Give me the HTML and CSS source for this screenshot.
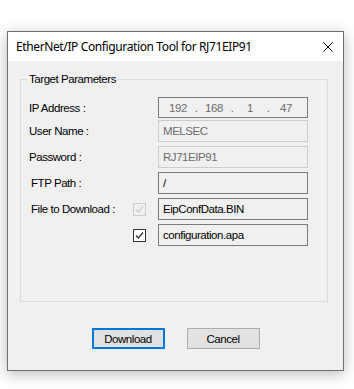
FILE: index.html
```html
<!DOCTYPE html>
<html>
<head>
<meta charset="utf-8">
<link rel="stylesheet" href="styles.css">
</head>
<body>
<div class="window">
  <div class="titlebar">
    <span class="title">EtherNet/IP Configuration Tool for RJ71EIP91</span>
    <svg class="close" width="10" height="10" viewBox="0 0 10 10"><path d="M0.5 0.5 L9.5 9.5 M9.5 0.5 L0.5 9.5" stroke="#000" stroke-width="1" fill="none"/></svg>
  </div>
  <div class="client">
    <fieldset class="group">
      <legend>Target Parameters</legend>
      <div class="rows">
        <div class="row row-ip">
          <span class="label">IP Address :</span>
          <span></span>
          <div class="field ip">
            <span class="oct">192</span><span class="dot">.</span>
            <span class="oct">168</span><span class="dot">.</span>
            <span class="oct">1</span><span class="dot">.</span>
            <span class="oct">47</span>
          </div>
        </div>
        <div class="row row-user">
          <span class="label">User Name :</span>
          <span></span>
          <div class="field disabled">MELSEC</div>
        </div>
        <div class="row">
          <span class="label">Password :</span>
          <span></span>
          <div class="field disabled">RJ71EIP91</div>
        </div>
        <div class="row">
          <span class="label indent">FTP Path :</span>
          <span></span>
          <div class="field">/</div>
        </div>
        <div class="row">
          <span class="label indent">File to Download :</span>
          <svg class="check" width="13" height="13" viewBox="0 0 13 13"><rect x="0.5" y="0.5" width="12" height="12" fill="#f0f0f0" stroke="#cccccc"/><path d="M3 6.5 L5.3 9 L10 3.5" stroke="#cccccc" stroke-width="1.3" fill="none"/></svg>
          <div class="field">EipConfData.BIN</div>
        </div>
        <div class="row">
          <span class="label"></span>
          <svg class="check" width="13" height="13" viewBox="0 0 13 13"><rect x="0.5" y="0.5" width="12" height="12" fill="#ffffff" stroke="#333333"/><path d="M3 6.5 L5.3 9 L10 3.5" stroke="#333333" stroke-width="1.3" fill="none"/></svg>
          <div class="field">configuration.apa</div>
        </div>
      </div>
    </fieldset>
    <div class="buttons">
      <button class="btn default">Download</button>
      <button class="btn">Cancel</button>
    </div>
  </div>
</div>
</body>
</html>
```
FILE: styles.css
```css
html, body {
  margin: 0;
  padding: 0;
  background: #ffffff;
}
body {
  padding: 31px 0 0 7px;
  width: 354px;
  height: 389px;
  box-sizing: border-box;
  overflow: hidden;
}
.window {
  width: 337px;
  height: 340px;
  box-sizing: border-box;
  border: 1px solid #6f6f6f;
  background: #f0f0f0;
  box-shadow: 0 3px 14px rgba(0, 0, 0, 0.28);
  display: flex;
  flex-direction: column;
}
.titlebar {
  height: 29px;
  background: #ffffff;
  display: flex;
  align-items: center;
  padding: 0 9px 0 8px;
  flex: none;
}
.title {
  font-family: "Noto Sans", "Open Sans", sans-serif;
  font-size: 12px;
  color: #000;
  flex: 1;
  letter-spacing: -0.38px;
}
.close {
  display: block;
  margin-right: 1px;
}
.client {
  flex: 1;
  display: flex;
  flex-direction: column;
  font-family: "Liberation Sans", Arial, sans-serif;
  font-size: 11.5px;
  letter-spacing: -0.45px;
  color: #000;
}
.group {
  margin: 11px 15px 0 12px;
  padding: 11px 0 55px 8px;
  border: 1px solid #dcdcdc;
  min-width: 0;
}
.group legend {
  padding: 0 2px;
  margin-left: -2px;
  line-height: 14px;
}
.rows {
  display: flex;
  flex-direction: column;
  gap: 4px;
}
.row {
  display: grid;
  grid-template-columns: 103px 26px 150px;
  align-items: center;
}
.row-ip {
  margin-bottom: -2px;
}
.label.indent {
  padding-left: 2px;
}
.check {
  display: block;
  margin-left: 1px;
}
.field {
  height: 22px;
  box-sizing: border-box;
  border: 1px solid #7a7a7a;
  background: #f0f0f0;
  padding: 0 4px;
  display: flex;
  align-items: center;
  color: #000;
}
.field.disabled {
  border-color: #cccccc;
  color: #6d6d6d;
}
.field.ip {
  height: 21px;
  color: #6d6d6d;
  padding: 0 8px 0 6px;
  display: grid;
  grid-template-columns: 1fr 10px 1fr 10px 1fr 10px 1fr;
  justify-items: center;
}
.buttons {
  display: flex;
  justify-content: center;
  gap: 22px;
  margin-top: 26px;
}
.btn {
  width: 73px;
  height: 21px;
  box-sizing: border-box;
  background: #e1e1e1;
  border: 1px solid #adadad;
  font-family: "Liberation Sans", Arial, sans-serif;
  font-size: 11.5px;
  letter-spacing: -0.45px;
  color: #000;
  padding: 0;
  margin: 0;
}
.btn.default {
  border: 2px solid #0078d7;
}
```
